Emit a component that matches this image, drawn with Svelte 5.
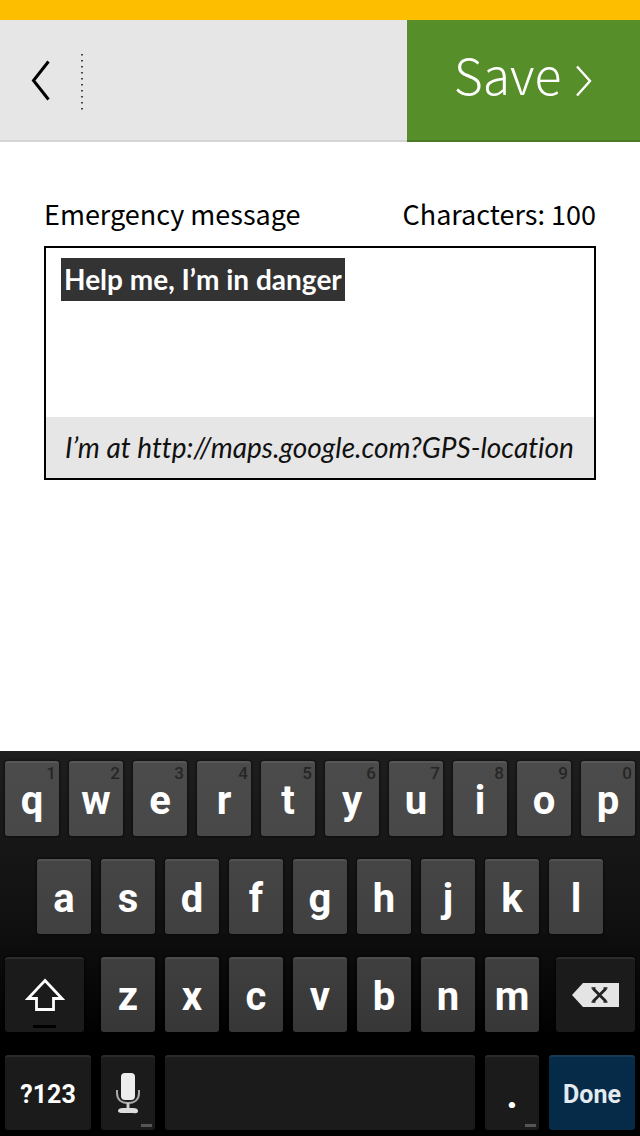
<script>
  let message = $state('Help me, I’m in danger');

  const topRow = [...'qwertyuiop'].map((letter, i) => ({ letter, digit: (i + 1) % 10 }));
  const middleRow = [...'asdfghjkl'];
  const bottomRow = [...'zxcvbnm'];
</script>

<div class="screen">
  <div class="strip"></div>
  <header class="bar">
    <button class="back" aria-label="Back">
      <svg width="20" height="42" viewBox="0 0 20 42" fill="none" stroke="#000" stroke-width="3">
        <path d="M18.5 1.5 3.5 20.5 18.5 39.5" />
      </svg>
    </button>
    <svg class="divider" width="2" height="58" viewBox="0 0 2 58">
      <path d="M1 2V58" stroke="#444" stroke-width="2" stroke-dasharray="1.6 4.4" />
    </svg>
    <button class="save">
      <span>Save</span>
      <svg width="18" height="32" viewBox="0 0 18 32" fill="none" stroke="#fff" stroke-width="2.4">
        <path d="M2 1.5 15 16 2 30.5" />
      </svg>
    </button>
  </header>

  <main>
    <div class="captions">
      <label for="message">Emergency message</label>
      <span>Characters: 100</span>
    </div>
    <div class="box">
      <div class="entry">
        <textarea id="message" rows="1" spellcheck="false" bind:value={message}></textarea>
      </div>
      <p>I’m at http://maps.google.com?GPS-location</p>
    </div>
  </main>

  <div class="keyboard">
    <div class="row first">
      {#each topRow as key}
        <button class="key"><span>{key.letter}</span><small>{key.digit}</small></button>
      {/each}
    </div>
    <div class="row second">
      {#each middleRow as letter}
        <button class="key"><span>{letter}</span></button>
      {/each}
    </div>
    <div class="row third">
      <button class="key dark shift" aria-label="Shift">
        <svg width="44" height="36" viewBox="0 0 44 36" fill="none" stroke="#fff" stroke-width="2.8">
          <path d="M22 3.5 39 21.5H30.5V32.5H13.5V21.5H5Z" />
        </svg>
        <i class="lock"></i>
      </button>
      {#each bottomRow as letter}
        <button class="key"><span>{letter}</span></button>
      {/each}
      <button class="key dark delete" aria-label="Delete">
        <svg width="48" height="26" viewBox="0 0 48 26">
          <path d="M0 13 11 1H47V25H11Z" fill="#e4e4e4" />
          <path d="M21 6.5 34 19.5M34 6.5 21 19.5" stroke="#222" stroke-width="2.8" />
          <path d="M19.5 6h4M31.5 6h4M19.5 20h4M31.5 20h4" stroke="#222" stroke-width="1.4" />
        </svg>
      </button>
    </div>
    <div class="row fourth">
      <button class="key dark wide word"><span>?123</span></button>
      <button class="key dark" aria-label="Voice input">
        <svg width="26" height="42" viewBox="0 0 26 42" fill="none">
          <rect x="6" y="1" width="14" height="27" rx="4" fill="#ededed" />
          <path d="M2 18V21C2 28 7 31 13 31S24 28 24 21V18" stroke="#aaa" stroke-width="2" />
          <path d="M13 31V38" stroke="#ccc" stroke-width="3" />
          <path d="M3 39Q3 36 8 36H18Q23 36 23 39T18 41H8Q3 41 3 39Z" fill="#ddd" />
        </svg>
        <i class="more"></i>
      </button>
      <button class="key dark space" aria-label="Space"></button>
      <button class="key dark period"><span>.</span><i class="more"></i></button>
      <button class="key wide word done"><span>Done</span></button>
    </div>
  </div>
</div>

<style>
  .screen {
    display: flex;
    flex-direction: column;
    min-height: 100vh;
    background: #fff;
    color: #000;
    font-family: 'Noto Sans CJK KR', 'Noto Sans', sans-serif;
  }
  button {
    border: 0;
    margin: 0;
    padding: 0;
    background: none;
    font: inherit;
    color: inherit;
  }
  svg {
    display: block;
  }
  .strip {
    height: 20px;
    background: #fdbe00;
  }
  .bar {
    display: flex;
    align-items: center;
    height: 122px;
    background: #e6e6e6;
    box-shadow: inset 0 -2px #d4d4d4;
  }
  .back {
    padding: 0 31px 0 30px;
  }
  .save {
    display: flex;
    align-items: center;
    justify-content: center;
    gap: 14px;
    align-self: stretch;
    width: 233px;
    margin-left: auto;
    background: #568e29;
    box-shadow: inset 0 -2px #4b7924;
    color: #fff;
    font-size: 50px;
    font-weight: 300;
    line-height: 60px;
  }
  .save span {
    padding-bottom: 16px;
  }
  main {
    flex: 1;
    padding: 52px 44px;
  }
  .captions {
    display: flex;
    justify-content: space-between;
    font-size: 27px;
    line-height: 40px;
    padding-bottom: 12px;
  }
  .box {
    border: 2px solid #000;
  }
  .entry {
    display: flex;
    align-items: flex-start;
    min-height: 159px;
    padding: 10px 15px 0;
  }
  textarea {
    field-sizing: content;
    box-sizing: border-box;
    max-width: 100%;
    margin: 0;
    padding: 0 3px;
    border: 0;
    outline: 0;
    resize: none;
    overflow: hidden;
    background: #333;
    color: #fff;
    font: 700 28px/43px Lato, sans-serif;
  }
  .box p {
    margin: 0;
    padding: 0 19px;
    background: #e6e6e6;
    color: #111;
    font-family: Lato, sans-serif;
    font-size: 28px;
    font-style: italic;
    font-variant-ligatures: none;
    line-height: 61px;
  }
  .keyboard {
    display: flex;
    flex-direction: column;
    gap: 23px;
    padding: 10px 5px 6px;
    background: linear-gradient(#1e1e1e, #101010 45%, #000 75%);
    font-family: Roboto, sans-serif;
    color: #fff;
  }
  .row {
    display: grid;
    grid-template-columns: repeat(20, 1fr);
    gap: 10px;
  }
  .key {
    position: relative;
    display: flex;
    align-items: center;
    justify-content: center;
    grid-column: span 2;
    height: 75px;
    border-radius: 3px;
    background: linear-gradient(#4b4b4b, #484848);
    box-shadow: inset 0 2px rgb(255 255 255 / 7%), 0 0 3px #000;
    font-size: 40px;
    font-weight: 700;
    line-height: 48px;
  }
  .key span {
    padding-top: 4px;
  }
  .second .key {
    background: linear-gradient(#454545, #404040);
  }
  .second .key:first-child {
    grid-column: 2 / span 2;
  }
  .third .key {
    background: linear-gradient(#3f3f3f, #373737);
  }
  .key small {
    position: absolute;
    top: 1px;
    right: 3px;
    font-size: 17px;
    font-weight: 500;
    line-height: 22px;
    color: #262626;
  }
  .row .dark {
    background: #1b1b1b;
  }
  .row .shift,
  .row .delete,
  .row .wide {
    grid-column: span 3;
  }
  .shift {
    margin-right: 7px;
  }
  .delete {
    margin-left: 7px;
  }
  .row .space {
    grid-column: span 10;
  }
  .word {
    font-size: 25px;
    line-height: 30px;
  }
  .row .done {
    background: #052b48;
    color: #e3eaf0;
  }
  .lock {
    position: absolute;
    bottom: 4px;
    left: 28px;
    width: 23px;
    height: 3px;
    background: #000;
  }
  .more {
    position: absolute;
    right: 3px;
    bottom: 3px;
    width: 11px;
    height: 3px;
    background: #555;
  }
</style>
